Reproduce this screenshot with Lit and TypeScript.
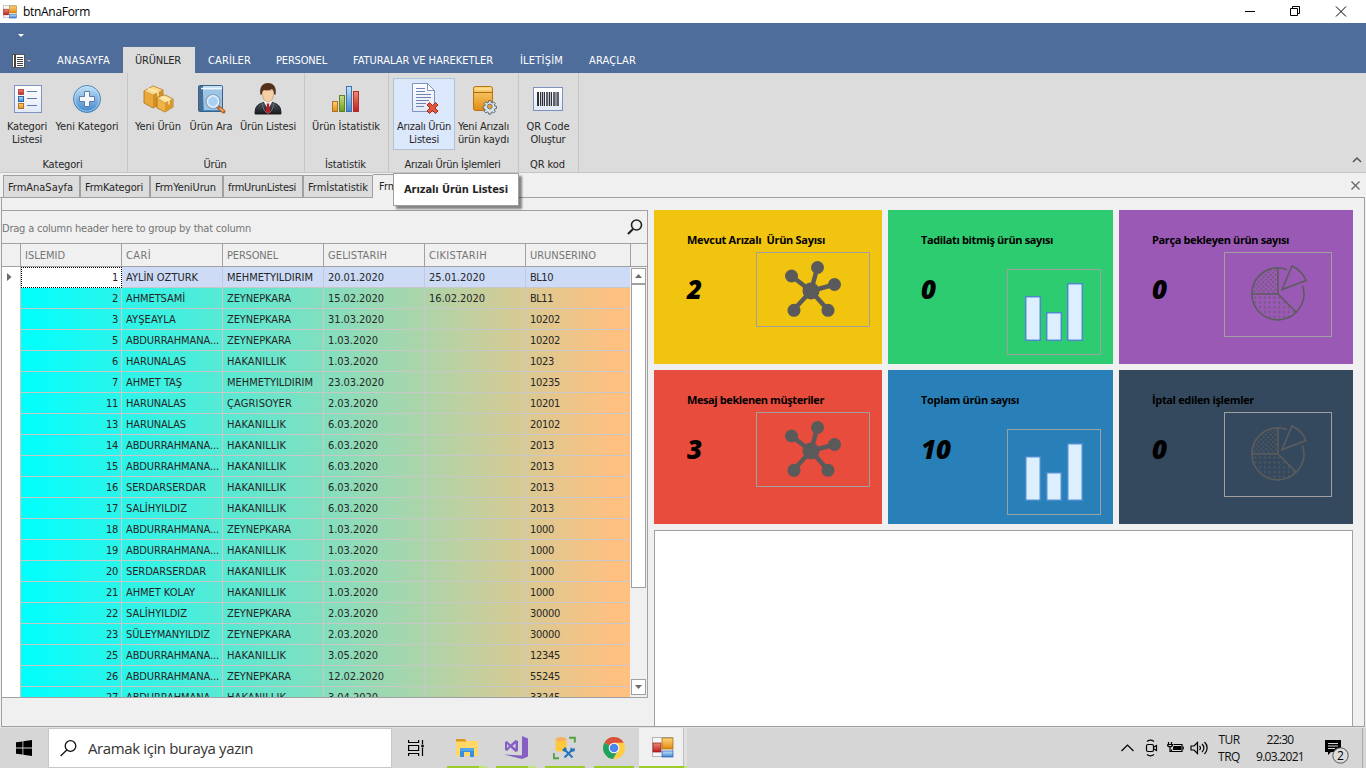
import { LitElement, html, svg, css } from "lit";
import { customElement, property } from "lit/decorators.js";

/** A run of text whose tracking is adjusted so that it spans `w` pixels. */
@customElement("fit-text")
class FitText extends LitElement {
  @property({ type: Number }) w = 0;
  @property() text = "";
  static styles = css`
    :host { display: inline-block; white-space: pre; }
    span { display: inline-block; white-space: pre; }
  `;
  render() {
    return html`<span>${this.text}</span>`;
  }
  firstUpdated() {
    const s = this.renderRoot.querySelector("span") as HTMLElement;
    const natural = s.getBoundingClientRect().width;
    if (this.w && this.text.length) {
      const gap = (this.w - natural) / this.text.length;
      s.style.letterSpacing = gap.toFixed(3) + "px";
    }
  }
}

const t = (text: string, w: number) => html`<fit-text .w=${w} .text=${text}></fit-text>`;

const defs = svg`<defs>
  <linearGradient id="r" x2="0" y2="1"><stop stop-color="#f08a70"/><stop offset="1" stop-color="#c01c1c"/></linearGradient>
  <linearGradient id="b" x2="0" y2="1"><stop stop-color="#c4e2f8"/><stop offset="1" stop-color="#3f86cc"/></linearGradient>
  <linearGradient id="o" x2="0" y2="1"><stop stop-color="#ffd478"/><stop offset="1" stop-color="#e08a10"/></linearGradient>
  <linearGradient id="g" x2="0" y2="1"><stop stop-color="#c8e07a"/><stop offset="1" stop-color="#6f9c1c"/></linearGradient>
  <linearGradient id="w" x2="0" y2="1"><stop stop-color="#fff"/><stop offset="1" stop-color="#e2e9f5"/></linearGradient>
  <linearGradient id="k" x2="0" y2="1"><stop stop-color="#505860"/><stop offset="1" stop-color="#15191d"/></linearGradient>
</defs>`;

const gearPath = "M19 20.5l.6-2.3h2.8l.6 2.3 1.3.6 2-1.2 2 2-1.200 2 .6 1.300 2.300.6v2.800l-2.300.6-.6 1.300 1.200 2-2 2-2-1.200-1.300.6-.6 2.300h-2.800l-.6-2.300-1.300-.6-2 1.200-2-2 1.200-2-.6-1.300-2.300-.6v-2.800l2.300-.6.6-1.300-1.200-2 2-2 2 1.200z";

const ICONS: Record<string, unknown> = {
  list: svg`<g transform="translate(1 0)"><rect x="2.500" y="2.500" width="27" height="27" fill="url(#w)" stroke="#7f93c4"/>
    <rect x="6.500" y="6.500" width="5" height="5" fill="url(#r)" stroke="#b0524a"/>
    <rect x="6.500" y="13.500" width="5" height="5" fill="url(#b)" stroke="#2a66b0"/>
    <rect x="6.500" y="20.500" width="5" height="5" fill="url(#o)" stroke="#b8702a"/>
    <path d="M15 8.500h10M15 15.500h10M15 22.500h10" stroke="#5a78b4"/></g>`,
  plus: svg`<circle cx="16" cy="16" r="13.500" fill="url(#b)" stroke="#4a86b8"/><circle cx="16" cy="16" r="12.300" fill="none" stroke="#c8e4f6" stroke-opacity=".6"/>
    <path d="M13.500 8.500h5v5h5v5h-5v5h-5v-5h-5v-5h5z" fill="#f4f6fc" stroke="#5a7ca8"/>`,
  boxes: svg`<path d="M2 8l9-5 10 4v13l-10 5-9-5z" fill="#e9a93a" stroke="#a8701c" stroke-width=".8"/>
    <path d="M2 8l9-5 10 4-10 5z" fill="#fbd98c" stroke="#c08a30" stroke-width=".6"/><path d="M11 12l10-5v13l-10 5z" fill="#d38f25"/>
    <path d="M6 5.500l10 4v4" fill="none" stroke="#fff0bc" stroke-width="1.300"/>
    <path d="M15 15l8-3 8 4v8l-8 5-8-4z" fill="#f0b445" stroke="#a8701c" stroke-width=".8"/>
    <path d="M15 15l8-3 8 4-8 4z" fill="#ffe09a" stroke="#c08a30" stroke-width=".6"/><path d="M23 20l8-4v8l-8 5z" fill="#dc982a"/>
    <path d="M19 13.500l8 4v4" fill="none" stroke="#fff4cc" stroke-width="1.200"/>`,
  book: svg`<rect x="3.500" y="2.500" width="24" height="26" rx="1" fill="url(#b)" stroke="#3a6288"/>
    <rect x="4" y="3" width="4" height="25" fill="#4a6c90"/><path d="M6 5.500h21" stroke="#eef6fc" stroke-width="1.500"/>
    <rect x="9" y="7" width="18" height="20" fill="#9cc4e4"/>
    <path d="M22.500 23.500l6 5" stroke="#b06428" stroke-width="4" stroke-linecap="round"/><path d="M24.500 25l4 3.300" stroke="#f0b070" stroke-width="1.500"/>
    <circle cx="18" cy="18.500" r="7" fill="#eef6fd" stroke="#7f9cbc" stroke-width="1.200"/><circle cx="18" cy="18.500" r="5" fill="#a8d0f2" stroke="#cfe2f4"/>`,
  man: svg`<path d="M3 31c0-8 3-10 9-11.500h8c6 1.500 9 3.500 9 11.500z" fill="url(#k)" stroke="#1c2024"/>
    <path d="M12 19l4 7 4-7-1-2h-6z" fill="#fff"/><path d="M14.500 20.500h3l-.5 2 1.500 7-2.500 1.500-2.500-1.500 1.500-7z" fill="#c01820"/>
    <path d="M10 20l2 7 3.500 3.500M22 20l-2 7-3.500 3.500" fill="none" stroke="#68737c"/>
    <path d="M10 7c0 7 2 12 6 12s6-5 6-12z" fill="#f4cfa4" stroke="#b4845c" stroke-width=".6"/>
    <path d="M8.500 12c-1.500-8 2-12 7.500-12s9 4 7.500 12l-1.500-1c0-3-1-4-2-5-3 2-6 1-8 1-2 1-2 3-2 4z" fill="#54301c"/>`,
  bars: svg`<rect x="2.500" y="18.500" width="5" height="10" fill="url(#o)" stroke="#b07030"/><rect x="9.500" y="12.500" width="5" height="16" fill="url(#g)" stroke="#5f8424"/>
    <rect x="16.500" y="3.500" width="5" height="25" fill="url(#b)" stroke="#3c74b0"/><rect x="23.500" y="8.500" width="5" height="20" fill="url(#r)" stroke="#a83030"/>`,
  docx: svg`<path d="M4.500.5h15l7 7v21h-22z" fill="url(#w)" stroke="#7e93c2"/><path d="M19.500.5v7h7z" fill="#fff" stroke="#7e93c2"/>
    <path d="M8 5.500h9M8 8.500h9M8 11.500h15M8 14.500h15M8 17.500h13M8 20.500h10M8 23.500h8" stroke="#6f84b4"/>
    <path d="M19 22l2.500-2.500 3 3 3-3L30 22l-3 3 3 3-2.500 2.500-3-3-3 3L19 28l3-3z" fill="#e0563c" stroke="#a82a1c"/>`,
  boxgear: svg`<rect x="5.500" y="3.500" width="19" height="24" rx="2" fill="url(#o)" stroke="#b87414"/><path d="M6 9.500h18" stroke="#a86a14"/><path d="M7 6h16" stroke="#ffe9a8"/>
    <g transform="translate(6 4) scale(.75)"><path d=${gearPath} fill="#d8e0e8" stroke="#56636f" stroke-width="1.300"/><circle cx="21" cy="26" r="3.200" fill="#e8a030" stroke="#56636f"/></g>`,
  barcode: svg`<rect x="1.500" y="4.500" width="29" height="23" fill="url(#w)" stroke="#7c92bc"/>
    <path d="M6 9v14" stroke="#2c3038" stroke-width="2"/><path d="M8.500 9v14M12.500 9v14M19.500 9v14M24 9v14" stroke="#2c3038" stroke-width="1"/><path d="M10.500 9v14M15 9v14M17.500 9v14M22 9v14M26 9v14" stroke="#2c3038" stroke-width="1.500"/>`,
};
const icon = (n: string) => html`<svg class="ico" viewBox="0 0 32 32">${defs}${ICONS[n]}</svg>`;

const winforms = (cls: string) => html`<svg class=${cls} viewBox="0 0 22 21">${defs}
  <rect x=".5" y=".5" width="20" height="19" fill="#f6f6f6" stroke="#b4b4b4"/>
  <rect x="1" y="6" width="8" height="9" fill="url(#r)" stroke="#8c1414" stroke-width=".7"/>
  <rect x="10" y="1" width="11" height="11" fill="url(#o)" stroke="#9a6c08" stroke-width=".7"/>
  <rect x="10" y="14" width="11" height="6" fill="url(#b)" stroke="#2c58b8" stroke-width=".7"/></svg>`;

type Btn = { icon: string; w: number; ml: number; lines: [string, number][]; hot?: boolean };
const GROUPS: { w: number; cap: [string, number]; btns: Btn[] }[] = [
  { w: 128, cap: ["Kategori", 40], btns: [
    { icon: "list", w: 50, ml: 2, lines: [["Kategori", 40], ["Listesi", 30]] },
    { icon: "plus", w: 68, ml: 1, lines: [["Yeni Kategori", 63]] } ] },
  { w: 177, cap: ["Ürün", 23], btns: [
    { icon: "boxes", w: 50, ml: 5, lines: [["Yeni Ürün", 46]] },
    { icon: "book", w: 50, ml: 3, lines: [["Ürün Ara", 43]] },
    { icon: "man", w: 62, ml: 1, lines: [["Ürün Listesi", 56]] } ] },
  { w: 84, cap: ["İstatistik", 41], btns: [{ icon: "bars", w: 72, ml: 5, lines: [["Ürün İstatistik", 68]] }] },
  { w: 130, cap: ["Arızalı Ürün İşlemleri", 96], btns: [
    { icon: "docx", w: 62, ml: 4, lines: [["Arızalı Ürün", 54], ["Listesi", 30]], hot: true },
    { icon: "boxgear", w: 57, ml: 0, lines: [["Yeni Arızalı", 51], ["ürün kaydı", 51]] } ] },
  { w: 60, cap: ["QR kod", 35], btns: [{ icon: "barcode", w: 50, ml: 4, lines: [["QR Code", 43], ["Oluştur", 35]] }] },
];

const TABS: [string, number][] = [["ANASAYFA", 53], ["ÜRÜNLER", 46], ["CARİLER", 43], ["PERSONEL", 51], ["FATURALAR VE HAREKETLER", 140], ["İLETİŞİM", 43], ["ARAÇLAR", 47]];
const DOCS: [string, number][] = [["FrmAnaSayfa", 65], ["FrmKategori", 58], ["FrmYeniUrun", 61], ["frmUrunListesi", 68], ["Frmİstatistik", 60]];

const A = "ABDURRAHMANA...", H = "HAKANILLIK", Z = "ZEYNEPKARA", M = "MEHMETYILDIRIM";
const ROWS: string[][] = [
  ["1", "AYLİN OZTURK", M, "20.01.2020", "25.01.2020", "BL10"],
  ["2", "AHMETSAMİ", Z, "15.02.2020", "16.02.2020", "BL11"],
  ["3", "AYŞEAYLA", Z, "31.03.2020", "", "10202"],
  ["5", A, Z, "1.03.2020", "", "10202"],
  ["6", "HARUNALAS", H, "1.03.2020", "", "1023"],
  ["7", "AHMET TAŞ", M, "23.03.2020", "", "10235"],
  ["11", "HARUNALAS", "ÇAGRISOYER", "2.03.2020", "", "10201"],
  ["13", "HARUNALAS", H, "6.03.2020", "", "20102"],
  ["14", A, H, "6.03.2020", "", "2013"],
  ["15", A, H, "6.03.2020", "", "2013"],
  ["16", "SERDARSERDAR", H, "6.03.2020", "", "2013"],
  ["17", "SALİHYILDIZ", H, "6.03.2020", "", "2013"],
  ["18", A, Z, "1.03.2020", "", "1000"],
  ["19", A, H, "1.03.2020", "", "1000"],
  ["20", "SERDARSERDAR", H, "1.03.2020", "", "1000"],
  ["21", "AHMET KOLAY", H, "1.03.2020", "", "1000"],
  ["22", "SALİHYILDIZ", Z, "2.03.2020", "", "30000"],
  ["23", "SÜLEYMANYILDIZ", Z, "2.03.2020", "", "30000"],
  ["25", A, H, "3.05.2020", "", "12345"],
  ["26", A, Z, "12.02.2020", "", "55245"],
  ["27", A, H, "3.04.2020", "", "33245"],
];
const WIDTHS: Record<string, number> = {
  "AYLİN OZTURK": 72, AHMETSAMİ: 59, AYŞEAYLA: 50, [A]: 93, HARUNALAS: 60, "AHMET TAŞ": 56, SERDARSERDAR: 80,
  SALİHYILDIZ: 61, "AHMET KOLAY": 69, SÜLEYMANYILDIZ: 84, [M]: 86, [Z]: 64, [H]: 59, ÇAGRISOYER: 65, BL10: 23, BL11: 23,
};
const width = (s: string) => WIDTHS[s] ?? (/\./.test(s) ? (s.length === 10 ? 56 : 50) : s.length * 6);
const HEAD: [string, number][] = [["ISLEMID", 40], ["CARİ", 25], ["PERSONEL", 51], ["GELISTARIH", 59], ["CIKISTARIH", 58], ["URUNSERINO", 66]];

const hub = html`<svg class="hub" viewBox="0 0 114 75"><g stroke="#5a5a5a" stroke-width="4.500" fill="#5a5a5a">
  <path d="M55 39L35.500 24M55 39L61.500 15M55 39L78.500 32.500M55 39L37.500 58M55 39L72 58"/>
  <g stroke="none"><circle cx="55" cy="39" r="8.500"/><circle cx="35.500" cy="24" r="6.500"/><circle cx="61.500" cy="15.500" r="6.500"/><circle cx="78.500" cy="32.500" r="6.500"/><circle cx="38" cy="58.300" r="6.500"/><circle cx="72" cy="58.300" r="6.500"/></g></g></svg>`;
const chart = html`<svg class="chart" viewBox="0 0 94 86"><g fill="#ddeefe" stroke="#4a8acb" stroke-width="1.500">
  <rect x="18.700" y="27.700" width="14.600" height="43.600"/><rect x="39.700" y="43.700" width="14.600" height="27.600"/><rect x="60.700" y="14.700" width="14.600" height="56.600"/></g></svg>`;
const pie = html`<svg class="pie" viewBox="0 0 108 85"><defs>
  <pattern id="d1" width="4.800" height="4.800" patternUnits="userSpaceOnUse"><circle cx="1.200" cy="1.200" r=".85" fill="#5c5c5c"/><circle cx="3.600" cy="3.600" r=".85" fill="#5c5c5c"/></pattern>
  <pattern id="d2" width="4.800" height="4.800" patternUnits="userSpaceOnUse"><circle cx="2.400" cy="2.400" r=".95" fill="#5c5c5c"/></pattern></defs>
  <path d="M54 42V16.500A25.500 25.500 0 0 0 28.500 42z" fill="url(#d1)"/><path d="M54 42H28.500A25.500 25.500 0 0 0 72 60z" fill="url(#d2)"/>
  <g fill="none" stroke="#5c5c5c" stroke-width="1.600"><path d="M63 17.500A26 26 0 1 0 78.500 33.500M54 16v26H28M54 42l18 18M68 14L58 37.500 82 28.500A26 26 0 0 0 68 14z"/></g></svg>`;
const CARDS: [string, number, string, number, string, unknown, string][] = [
  ["Mevcut Arızalı  Ürün Sayısı", 138, "2", 16, "yellow", hub, "bx1"],
  ["Tadilatı bitmiş ürün sayısı", 132, "0", 16, "green", chart, "bx2"],
  ["Parça bekleyen ürün sayısı", 137, "0", 16, "purple", pie, "bx3"],
  ["Mesaj beklenen müşteriler", 137, "3", 16, "red", hub, "bx1"],
  ["Toplam ürün sayısı", 98, "10", 30, "blue", chart, "bx2"],
  ["İptal edilen işlemler", 102, "0", 16, "navy", pie, "bx3"],
];

@customElement("app-root")
class AppRoot extends LitElement {
  static styles = css`
    :host { display: flex; flex-direction: column; width: 1366px; height: 768px; overflow: hidden; background: #f0f0f0; color: #262626;
      font: 11px/13px "DejaVu Sans Condensed", "DejaVu Sans", sans-serif; font-stretch: condensed; }
    * { box-sizing: border-box; }
    svg { display: block; flex: none; }
    .title { height: 23px; flex: none; background: #fff; display: flex; align-items: center; padding-left: 3px; color: #000; font: 12px/16px "Open Sans", sans-serif; }
    .wf { width: 14px; height: 14px; margin-right: 6px; }
    .title .win { margin-left: auto; margin-right: 1px; }
    .blue-top { height: 50px; flex: none; background: #4e6d9b; display: flex; flex-direction: column; }
    .quick { height: 24px; padding: 11px 0 0 18px; }
    .tabs { height: 26px; display: grid; grid-template-columns: 45px 78px 73px 68px 77px 167px 69px 71px; color: #fff; }
    .tab { padding: 7px 0 0 12px; }
    .tab.on { background: #dcdcdc; color: #262626; width: 72px; }
    .menu { padding: 7px 0 0 12px; }
    .ribbon { height: 100px; flex: none; background: #dcdcdc; border-bottom: 1px solid #c6c6c6; display: flex; }
    .group { border-right: 1px solid #c6c6c6; display: flex; flex-direction: column; height: 99px; padding-top: 5px; }
    .btns { display: flex; height: 80px; }
    .btn { display: flex; flex-direction: column; align-items: center; height: 72px; padding-top: 5px; flex: none; }
    .btn.hot { background: #dbe7fb; outline: 1px solid #b2c2d6; outline-offset: -1px; }
    .ico { width: 32px; height: 32px; margin-bottom: 5px; }
    .cap { text-align: center; padding-right: 2px; }
    .collapse { margin: 83px 4px 0 auto; }
    .docs { height: 25px; flex: none; display: flex; align-items: flex-end; padding-left: 3px; border-bottom: 1px solid #a0a0a0; position: relative; margin-right: 1px; }
    .doc { height: 22px; border: 1px solid #a0a0a0; border-bottom: 0; background: #dcdcdc; padding: 5px 0 0 4px; }
    .doc.active { height: 24px; background: #f0f0f0; border-left: 0; padding: 5px 0 0 6px; width: 70px; margin-bottom: -1px; position: relative; }
    .docs .x { margin: 0 5px 7px auto; }
    .tip { position: absolute; left: 393px; top: 0; width: 126px; height: 33px; background: #fff; border: 1px solid #a0a0a0; box-shadow: 3px 3px 2px rgba(0,0,0,.45); padding: 9px 0 0 10px; font-weight: bold; z-index: 2; }
    .main { flex: none; height: 529px; margin-left: 1px; width: 1364px; border: 1px solid #a0a0a0; border-top: 0; display: flex; padding-top: 12px; }
    .grid { width: 646px; height: 488px; border: 1px solid #a0a0a0; border-left: 0; margin-right: 6px; display: flex; flex-direction: column; flex: none; }
    .gp { height: 33px; border-bottom: 1px solid #a0a0a0; display: flex; justify-content: space-between; color: #757575; padding: 11px 4px 0 0; flex: none; }
    .gp svg { margin-top: -3px; }
    .hr, .row { display: grid; grid-template-columns: 19px 101px 101px 101px 101px 101px 105px; flex: none; }
    .hr { height: 23px; border-bottom: 1px solid #a0a0a0; color: #757575; }
    .hr > div { border-right: 1px solid #a0a0a0; padding: 5px 0 0 4px; height: 22px; }
    .gb { display: flex; flex: 1; min-height: 0; overflow: hidden; }
    .rows { width: 628px; overflow: hidden; background: linear-gradient(90deg, #0ff 20px, #ffc080 612px); flex: none; }
    .row { height: 21px; }
    .row > div { border-right: 1px solid #c8c8c8; border-bottom: 1px solid #c8c8c8; padding: 4px 0 0 4px; white-space: nowrap; overflow: hidden; }
    .row > div:first-child { background: #fff; border-bottom: 0; padding: 6px 0 0 5px; }
    .row > div:nth-child(2) { text-align: right; padding-right: 3px; }
    .row > div:last-child { border-right: 0; }
    .row.sel > div { background: #cddbf6; }
    .row.sel > div:first-child { background: #fff; border-right-color: #c8c8c8; }
    .row.sel > div:nth-child(2) { background: #fff; border: 1px dotted #000; padding-top: 3px; padding-right: 3px; }
    .row.sel > div:nth-child(n+3) { border-right-color: #c3cadb; }
    .sb { width: 15px; margin: 1px 0 2px 1px; display: flex; flex-direction: column; }
    .sb > div { border: 1px solid #a0a0a0; background: #fff; width: 15px; height: 16px; display: flex; align-items: center; justify-content: center; flex: none; }
    .sb > .thumb { height: 304px; margin-bottom: auto; }
    .right { display: flex; flex-direction: column; width: 699px; flex: none; }
    .cards { display: grid; grid-template-columns: 228px 225px 234px; grid-template-rows: 154px 154px; gap: 6px; margin-bottom: 6px; }
    .card { display: flex; color: #000; padding: 23px 0 0 33px; position: relative; font: bold 11px/14px "Open Sans", sans-serif; flex-direction: column; }
    .num { font: italic 800 26px/36px "Open Sans", sans-serif; margin-top: 24px; }
    .yellow { background: #f1c40f; } .green { background: #2ecc71; } .purple { background: #9b59b6; }
    .red { background: #e84c3d; } .blue { background: #2980b9; } .navy { background: #34495e; }
    .box { position: absolute; border: 1px solid #a0a0a0; }
    .box svg { margin: -1px; }
    .bx1 { right: 12px; top: 42px; width: 114px; height: 75px; }
    .bx2 { right: 12px; top: 59px; width: 94px; height: 86px; }
    .bx3 { right: 21px; top: 42px; width: 108px; height: 85px; }
    .hub { width: 114px; height: 75px; } .chart { width: 94px; height: 86px; } .pie { width: 108px; height: 85px; }
    .blank { background: #fff; border: 1px solid #a0a0a0; border-bottom: 0; flex: 1; }
    .task { height: 41px; flex: none; background: #d6d6d6; border-top: 1px solid #e2e2e2; display: flex; align-items: stretch; color: #111; font: 12px/17px "Open Sans", sans-serif; }
    .start { width: 48px; padding: 12px 0 0 16px; }
    .search { width: 344px; background: #fff; border: 1px solid #c8c8c8; display: flex; align-items: center; padding-left: 11px; gap: 11px; font-size: 15px; color: #333; }
    .tv { width: 55px; padding: 12px 0 0 16px; }
    .app { display: flex; flex-direction: column; width: 49px; }
    .app .ic { height: 38px; padding: 8px 0 0 8px; }
    .app .ul { height: 2px; width: 40px; background: #9ccb2c; display: flex; justify-content: flex-end; }
    .app .ul i { width: 8px; background: #c4e37c; }
    .app.cur .ic { background: #f0f0f0; width: 45px; padding: 9px 0 0 13px; margin-left: -4px; border-right: 1px solid #c0c0c0; box-shadow: 3px 0 #e0e0e0; }
    .app.cur .ul { width: 48px; margin-left: -4px; }
    .app.cur .ul i { width: 3px; }
    .wfb { width: 22px; height: 21px; }
    .tray { margin-left: auto; display: flex; align-items: center; }
    .two { display: flex; flex-direction: column; text-align: center; margin-left: 9px; }
    .two.date { margin-left: 16px; }
    .note { margin: 3px 12px 0 20px; }
    .peek { width: 4px; border-left: 1px solid #a8a8a8; align-self: stretch; }
    .bt { font: 12px "Open Sans", sans-serif; }
  `;

  render() {
    return html`
      <div class="title">${winforms("wf")}${t("btnAnaForm", 67)}
        <svg class="win" width="121" height="22" viewBox="0 0 121 22" fill="none" stroke="#000"><path d="M1 10.500h10M46.500 7.500h7v7h-7zM48.500 7.500v-2h7v7h-2M92 5.500l10 10M102 5.500l-10 10"/></svg>
      </div>
      <div class="blue-top">
        <div class="quick"><svg width="6" height="3"><path d="M0 0h6L3 3z" fill="#fff"/></svg></div>
        <div class="tabs">
          <div class="menu"><svg width="20" height="14"><rect x=".5" y=".5" width="12" height="13" fill="#fff" stroke="#555"/><path d="M3 0v14" stroke="#444" stroke-width="2"/><path d="M5 3.500h6M5 5.500h6M5 7.500h6M5 9.500h6M5 11.500h6" stroke="#444"/><path d="M15 6h4l-2 2z" fill="#b5aca2"/></svg></div>
          ${TABS.map(([n, w], i) => html`<div class="tab ${i === 1 ? "on" : ""}">${t(n, w)}</div>`)}
        </div>
      </div>
      <div class="ribbon">
        ${GROUPS.map(g => html`<div class="group" style="width:${g.w}px">
          <div class="btns">${g.btns.map(b => html`<div class="btn ${b.hot ? "hot" : ""}" style="width:${b.w}px;margin-left:${b.ml}px">${icon(b.icon)}${b.lines.map(l => t(...l))}</div>`)}</div>
          <div class="cap">${t(...g.cap)}</div></div>`)}
        <svg class="collapse" width="10" height="8" fill="none" stroke="#555" stroke-width="1.500"><path d="M1 6l4-4 4 4"/></svg>
      </div>
      <div class="docs">
        ${DOCS.map(([n, w], i) => html`<div class="doc" style="width:${[77, 70, 73, 80, 70][i]}px">${t(n, w)}</div>`)}
        <div class="doc active">Frm</div>
        <svg class="x" width="9" height="9" stroke="#666" stroke-width="1.300"><path d="M.5.5l8 8M8.500.5l-8 8"/></svg>
        <div class="tip">${t("Arızalı Ürün Listesi", 104)}</div>
      </div>
      <div class="main">
        <div class="grid">
          <div class="gp">${t("Drag a column header here to group by that column", 249)}
            <svg width="16" height="17" fill="none" stroke="#222"><circle cx="9.500" cy="6" r="5" stroke-width="1.600"/><path d="M6 10l-5 5" stroke-width="2.200"/></svg></div>
          <div class="hr"><div></div>${HEAD.map(h => html`<div>${t(...h)}</div>`)}</div>
          <div class="gb">
            <div class="rows">${ROWS.map((r, i) => html`<div class="row ${i ? "" : "sel"}">
              <div>${i ? "" : html`<svg width="5" height="8"><path d="M0 0l4.500 4L0 8z" fill="#6a6a6a"/></svg>`}</div>
              ${r.map(c => html`<div>${c ? t(c, width(c)) : ""}</div>`)}</div>`)}</div>
            <div class="sb">
              <div><svg width="7" height="4"><path d="M0 4h7L3.500 0z" fill="#6a6a6a"/></svg></div>
              <div class="thumb"></div>
              <div><svg width="7" height="4"><path d="M0 0h7L3.500 4z" fill="#6a6a6a"/></svg></div>
            </div>
          </div>
        </div>
        <div class="right">
          <div class="cards">${CARDS.map(([n, w, v, vw, c, pic, bx]) => html`<div class="card ${c}">${t(n, w)}<div class="num">${t(v, vw)}</div><div class="box ${bx}">${pic}</div></div>`)}</div>
          <div class="blank"></div>
        </div>
      </div>
      <div class="task">
        <div class="start"><svg width="16" height="16" fill="#000"><path d="M0 2.300l6.500-.9v6.200H0zM7.300 1.300L16 0v7.600H7.300zM0 8.400h6.500v6.200L0 13.700zM7.300 8.400H16V16l-8.700-1.300z"/></svg></div>
        <div class="search"><svg width="17" height="17" fill="none" stroke="#111" stroke-width="1.300"><circle cx="10.500" cy="6" r="5.300"/><path d="M6.800 10L.6 16"/></svg>${t("Aramak için buraya yazın", 165)}</div>
        <div class="tv"><svg width="17" height="16" fill="none" stroke="#000" stroke-width="1.200"><path d="M.6 0v2.500h10V0M.6 5.500h10v5H.6zM.6 16v-2.500h10V16M14.500 0v16"/><path d="M13 4.500h3v3h-3z" fill="#000" stroke="#d6d6d6" stroke-width=".6"/></svg></div>
        <div class="app"><div class="ic"><svg width="24" height="24" viewBox="0 0 24 24"><path d="M1 3h9l2 2h11v15H1z" fill="#ffd868"/><path d="M1 3h9l1.500 2.500H1z" fill="#d99a1c"/><path d="M5 21v-9h14v9h-4v-5H9v5z" fill="#3a8edc"/><path d="M5 12h14v3H5z" fill="#55a6e8"/></svg></div><div class="ul"><i></i></div></div>
        <div class="app"><div class="ic"><svg width="24" height="24" viewBox="0 0 24 24" fill="#865fc5"><path d="M18 0l6 2.500v18L18 23 0 18.500l18 1z"/><path fill-rule="evenodd" d="M11.500 4l2.500 1v10l-2.500 1-5-4.500L3 15l-2-1V6l2-1 3.500 3.500zM3 8v4l2-2zm8.500-.5L8.500 10l3 2.500z"/></svg></div><div class="ul"><i></i></div></div>
        <div class="app"><div class="ic"><svg width="24" height="24" viewBox="0 0 24 24"><path d="M2.500 3v11c0 2 11 2 11 0V3z" fill="#ffc83c"/><ellipse cx="8" cy="3.200" rx="5.500" ry="2.200" fill="#f8b060"/><path d="M16 1.800h5.800V6.500M.8 17v5.200H6" fill="none" stroke="#54a044" stroke-width="2"/><path d="M11 13l8.500 8.500M11.500 21.500L20 13" stroke="#2674be" stroke-width="2"/><path d="M9 14l3-3 2 2-2.500 3zM17 14l1-3 1 2 2.500-1 .5 3-3 1z" fill="#2674be"/></svg></div><div class="ul"></div></div>
        <div class="app"><div class="ic"><svg width="24" height="24" viewBox="0 0 24 24"><circle cx="12" cy="12" r="11" fill="#ffce45"/><path d="M12 12L2.500 6.500A11 11 0 0 0 11 23l5-8.500z" fill="#1fa161"/><path d="M12 12L2.500 6.500A11 11 0 0 1 21.700 6.800H12z" fill="#d9503e"/><circle cx="12" cy="12" r="5.300" fill="#fff"/><circle cx="12" cy="12" r="4.300" fill="#4a86ef"/></svg></div><div class="ul"></div></div>
        <div class="app cur"><div class="ic">${winforms("wfb")}</div><div class="ul"><i></i></div></div>
        <div class="tray">
          <svg width="88" height="18" fill="none" stroke="#000" stroke-width="1.200">
            <path d="M.5 12l6-6 6 6"/>
            <rect x="25.500" y="5.500" width="7" height="7" rx="1.500"/><path d="M33 8l2.500-1.500v5L33 10M26 2.500c2-1.500 5-1.500 7 0M26 15.500c2 1.500 5 1.500 7 0"/>
            <path d="M52.500 5.500h8.500v7H50.500v-2" /><path d="M53 7.500h6.500v3H52.500z" fill="#000"/><path d="M62.200 7.500v3M47.500 3v2.500M50.500 3v2.500M46.500 5.500h5c0 3-5 3-5 0M49 8v4.500h2"/>
            <path d="M70 7h3l3.500-3.500v11L73 11h-3zM78.500 7c1.300 1.300 1.300 2.700 0 4M81 5c2.500 2.300 2.500 5.700 0 8M83.500 3c3.500 3.500 3.500 8.500 0 12"/>
          </svg>
          <div class="two">${t("TUR", 21)}${t("TRQ", 22)}</div>
          <div class="two date">${t("22:30", 27)}${t("9.03.2021", 48)}</div>
          <svg class="note" width="26" height="28"><path d="M1 4h16v12H7l-3 3v-3H1z" fill="#000"/><path d="M4 7.500h10M4 10h10M4 12.500h7" stroke="#d6d6d6"/><circle cx="16.500" cy="19.500" r="7.700" fill="#dcdcdc" stroke="#555"/><text class="bt" x="13" y="24">2</text></svg>
          <div class="peek"></div>
        </div>
      </div>`;
  }
}
